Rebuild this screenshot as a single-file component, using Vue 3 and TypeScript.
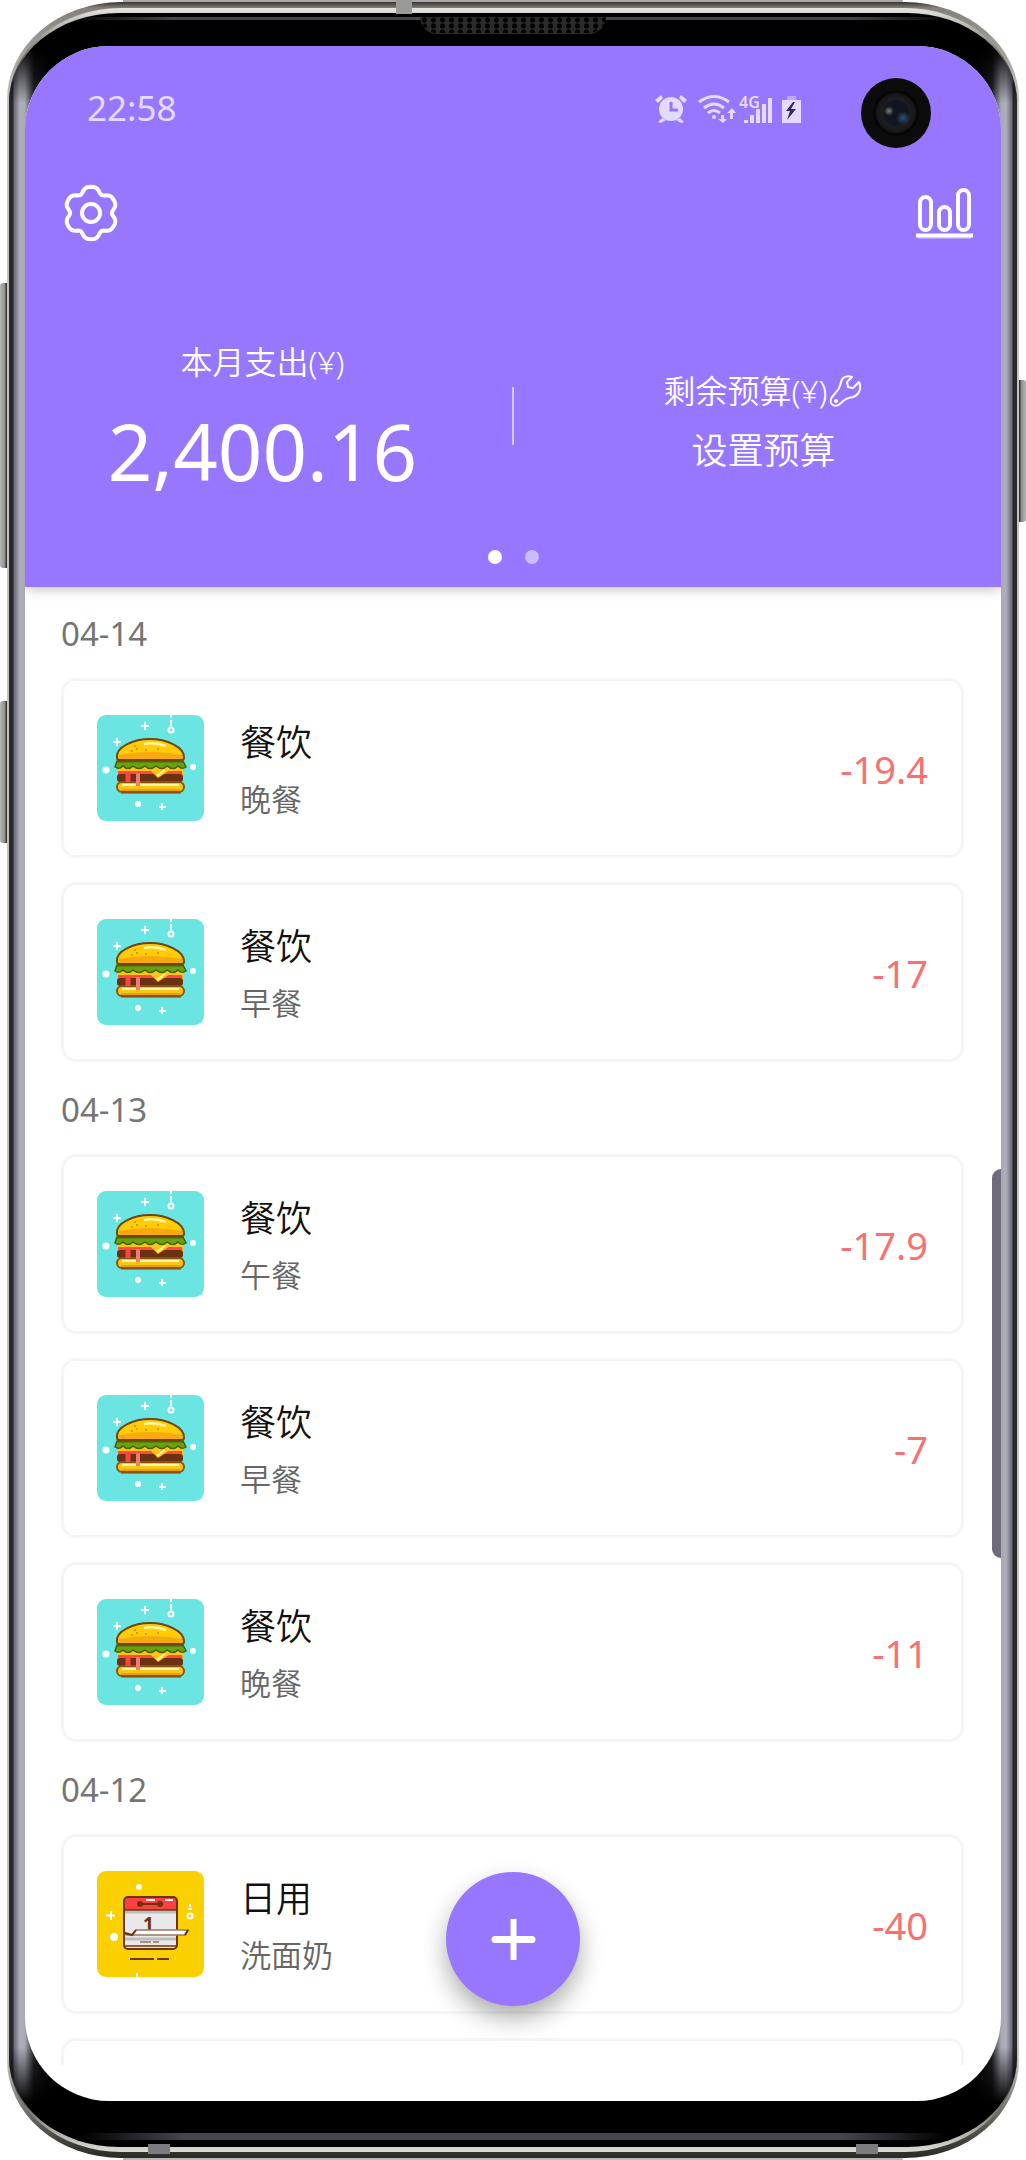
<script setup lang="ts">
type Kind = 'food' | 'daily'

interface Entry {
  kind: Kind
  title: string
  note: string
  amount: string
}

interface Day {
  date: string
  entries: Entry[]
}

const food = (note: string, amount: string): Entry => ({ kind: 'food', title: '餐饮', note, amount })

const days: Day[] = [
  { date: '04-14', entries: [food('晚餐', '-19.4'), food('早餐', '-17')] },
  { date: '04-13', entries: [food('午餐', '-17.9'), food('早餐', '-7'), food('晚餐', '-11')] },
  { date: '04-12', entries: [{ kind: 'daily', title: '日用', note: '洗面奶', amount: '-40' }] },
]

// Six-lobed outline of the settings cog, drawn around (29, 29).
const cog = Array.from({ length: 72 }, (_, i) => {
  const a = (i * Math.PI) / 36
  const r = 24.2 + 2.7 * Math.cos(6 * a) - 0.7 * Math.cos(12 * a)
  return `${(29 + r * Math.sin(a)).toFixed(1)},${(29 - r * Math.cos(a)).toFixed(1)}`
}).join(' ')
</script>

<template>
  <div class="stage">
    <i class="key volume"></i>
    <i class="key assist"></i>
    <i class="key power"></i>
    <div class="edge">
      <div class="rim">
        <div class="bezel">
          <i class="speaker"></i>
          <main class="screen">
            <header class="top">
              <div class="status">
                <time>22:58</time>
                <svg class="status-icons" width="150" height="32" viewBox="0 0 150 32" aria-hidden="true">
                  <g fill="#e3dafd">
                    <circle cx="19" cy="17" r="12" />
                    <path d="M3 8 L9 3 L11 6 L6 11Z M35 8 L29 3 L27 6 L32 11Z M10 26 L6 30 L9 31 L14 28Z M28 26 L32 30 L29 31 L24 28Z" />
                    <circle cx="62" cy="25" r="2" />
                    <path d="M69 23h3v4h3l-4 4-5-4h3zM78 27v-6h-3l5-5 4 5h-3v6z" />
                    <path d="M92 28h4v3h-4zM98 23h4v8h-4zM104 17h4v14h-4zM110 12h4v19h-4zM116 6h4v25h-4z" />
                    <path d="M130 8h19v23h-19z" />
                    <path d="M135 4h9v4h-9z" opacity=".5" />
                  </g>
                  <path d="M19 10v8h7" fill="none" stroke="#9677fe" stroke-width="3" />
                  <g fill="none" stroke="#e3dafd" stroke-width="3">
                    <path d="M47 10Q62 -1 77 10M52 16Q62 8 72 16M56 21Q62 16 68 21" />
                  </g>
                  <text x="87" y="16" font-size="16" font-weight="600" fill="#e3dafd">4G</text>
                  <path d="M141 10l-7 9h4l-3 9 9-11h-5l4-7z" fill="#35295c" />
                </svg>
              </div>
              <nav class="tools">
                <button type="button" aria-label="设置">
                  <svg width="58" height="58" viewBox="0 0 58 58" fill="none" stroke="#fff" stroke-width="4" stroke-linejoin="round">
                    <polygon :points="cog" />
                    <circle cx="29" cy="29" r="9" />
                  </svg>
                </button>
                <button type="button" aria-label="统计">
                  <svg width="57" height="58" viewBox="0 0 57 58" fill="none" stroke="#fff" stroke-width="4">
                    <rect x="4" y="13" width="11" height="33" rx="5.5" />
                    <rect x="23" y="23" width="11" height="23" rx="5.5" />
                    <rect x="42" y="6" width="11" height="40" rx="5.5" />
                    <path d="M0 51.5H57" />
                    <path d="M2 54H55" stroke-width="1" opacity=".6" />
                  </svg>
                </button>
              </nav>
              <section class="summary">
                <div class="col">
                  <span class="label">本月支出(¥)</span>
                  <strong class="total">2,400.16</strong>
                </div>
                <i class="divider"></i>
                <div class="col">
                  <span class="label">
                    剩余预算(¥)<svg width="36" height="36" viewBox="0 0 36 36" fill="none" stroke="#fff" stroke-width="2" stroke-linejoin="round" aria-hidden="true">
                      <path d="M24 4C19 2 14 4 13 9C12 15 10 17 4 24C2 27 2 31 5 32C8 34 11 32 13 30C17 26 19 25 25 24C31 22 34 15 31 9L25 15L20 14L19 9Z" />
                      <circle cx="8" cy="28" r="1" />
                    </svg>
                  </span>
                  <button class="budget" type="button">设置预算</button>
                </div>
              </section>
              <div class="dots"><i class="on"></i><i></i></div>
            </header>

            <div class="list">
              <section v-for="day in days" :key="day.date">
                <h2>{{ day.date }}</h2>
                <ul>
                  <li v-for="(entry, i) in day.entries" :key="i" class="card">
                    <svg v-if="entry.kind === 'food'" class="pic" width="107" height="106" viewBox="0 0 107 106" aria-hidden="true">
                      <rect width="107" height="106" rx="9" fill="#6be5e1" />
                      <g stroke="#fff" stroke-width="2">
                        <path d="M48 7v8M44 11h8M20 23v8M16 27h8M65 88v7M62 92h7M74 0v3M74 5v6" />
                        <circle cx="74" cy="15" r="2.5" fill="none" />
                      </g>
                      <g fill="#fff">
                        <circle cx="9" cy="55" r="3.5" />
                        <circle cx="96" cy="52" r="3" />
                        <circle cx="41" cy="89" r="3" />
                      </g>
                      <path d="M24 78h60" stroke="#5f9a90" stroke-width="2" />
                      <rect x="21" y="51" width="65" height="9" fill="#ffc414" />
                      <rect x="21" y="56" width="64" height="4" fill="#fb4a3e" />
                      <rect x="20" y="59" width="66" height="8" rx="3" fill="#6a3210" />
                      <path d="M51 53H76L61 63Z" fill="#ffc414" />
                      <path d="M60 61L68 55" stroke="#fff3a0" stroke-width="2" />
                      <rect x="20" y="67" width="67" height="10" rx="5" fill="#fcc60e" stroke="#8a5210" stroke-width="2" />
                      <path d="M24 75h59" stroke="#e89f10" stroke-width="2" />
                      <path d="M25 70h57" stroke="#fff5a8" stroke-width="2" />
                      <path d="M31 57v10" stroke="#fb4542" stroke-width="5" />
                      <path d="M41 58v13" stroke="#f47a78" stroke-width="4" />
                      <path d="M18 52L20 46H86L89 52Q85 55 81 51Q76 56 70 51Q65 56 59 51Q53 56 48 51Q42 56 36 51Q31 56 26 51Q22 55 18 52Z" fill="#67a409" stroke="#4c5c0c" stroke-width="1.5" />
                      <path d="M20 46h66" stroke="#4f6511" stroke-width="3" />
                      <path d="M20 43C18 32 37 24 53 24S88 32 87 43Q87 45 84 45H23Q20 45 20 43Z" fill="#ffcc05" stroke="#6e4612" stroke-width="2" />
                      <path d="M22 40Q54 34 85 40V44H22Z" fill="#f7a90f" />
                      <path d="M47 29Q58 27 69 31" stroke="#fff4a0" stroke-width="2.5" fill="none" />
                      <path d="M37 31h2M34 36h2M39 34h2M48 35h2M60 34h2" stroke="#d79a05" stroke-width="2" />
                    </svg>
                    <svg v-else class="pic" width="107" height="106" viewBox="0 0 107 106" aria-hidden="true">
                      <rect width="107" height="106" rx="9" fill="#fad000" />
                      <g stroke="#fff" stroke-width="2">
                        <path d="M14 40v9M9 44.5h9M93 33v3M91 38h4M40 102v4" />
                        <circle cx="93" cy="45" r="2.5" fill="none" />
                      </g>
                      <circle cx="42" cy="16" r="3" fill="#fff" />
                      <circle cx="17" cy="66" r="4" fill="#fff" />
                      <rect x="27" y="26" width="53" height="52" rx="4" fill="#e9e9e9" />
                      <path d="M27 39V30Q27 26 31 26H76Q80 26 80 30V39Z" fill="#fb403f" />
                      <path d="M28 41H79M28 68H79" stroke="#bdbdbd" stroke-width="3" />
                      <path d="M49 29h9M68 29h8" stroke="#fff" stroke-width="2" />
                      <path d="M43 33H63" stroke="#6b3410" stroke-width="2" />
                      <circle cx="43" cy="33" r="3" fill="#6b3410" />
                      <circle cx="63" cy="33" r="3" fill="#6b3410" />
                      <text x="46" y="60" font-size="19" font-weight="700" fill="#6b3410">1</text>
                      <path d="M27 39H80M28 75H79" stroke="#6b3410" stroke-width="1.5" />
                      <rect x="27" y="26" width="53" height="52" rx="4" fill="none" stroke="#6b3410" stroke-width="2" />
                      <path d="M28 63L35 64L39 59H91L88 64H30Z" fill="#fff" stroke="#9a7565" stroke-width="1.5" />
                      <path d="M28 62L35 64L39 59M91 59L88 64" fill="none" stroke="#6b3410" stroke-width="2" />
                      <path d="M43 71h11M56 71h6" stroke="#a9907f" stroke-width="2" />
                      <path d="M33 88H57M60 88H72" stroke="#6b3a06" stroke-width="2" />
                    </svg>
                    <div class="words">
                      <h3>{{ entry.title }}</h3>
                      <p>{{ entry.note }}</p>
                    </div>
                    <span class="amount">{{ entry.amount }}</span>
                  </li>
                </ul>
              </section>
              <div class="card peek"></div>
            </div>

            <i class="camera"></i>
            <i class="panel-handle"></i>
            <button class="add" type="button" aria-label="记一笔">
              <svg width="45" height="45" viewBox="0 0 45 45" stroke="#fff" stroke-linecap="round">
                <path d="M22.5 2V43" stroke-width="6" stroke-linecap="butt" />
                <path d="M4 22.5H41" stroke-width="7" />
              </svg>
            </button>
          </main>
        </div>
      </div>
    </div>
    <i class="band band-top"></i>
    <i class="band band-left"></i>
    <i class="band band-right"></i>
  </div>
</template>

<style>
body {
  margin: 0;
  background: #fff;
}
</style>

<style scoped>
* {
  box-sizing: border-box;
}

.stage {
  position: relative;
  padding: 2px 7px;
  font-family: "Noto Sans", "Noto Sans CJK SC", sans-serif;
  overflow: hidden;
  background:
    linear-gradient(#a8a8a8, #a8a8a8) center top / 76% 3px no-repeat,
    linear-gradient(#b8b8b8, #b8b8b8) center bottom / 76% 3px no-repeat,
    #fff;
}

.edge {
  position: relative;
  padding: 6px 2px;
  border-radius: 114px / 98px;
  background: linear-gradient(to bottom, #38332f 0, #85807b 6px, #c4c4c0 100px, #c4c4c0 calc(100% - 100px), #33312c calc(100% - 6px), #2c2a26 100%);
}

.rim {
  padding: 5px 0;
  border-radius: 112px / 94px;
  background: linear-gradient(to bottom, #e6e6e0 0, #d9d9d3 5px, #54504c 60px, #2b2b2d 130px, #2b2b2d calc(100% - 130px), #54504c calc(100% - 60px), #dcdcd6 100%);
}

.bezel {
  position: relative;
  padding: 33px 16px 46px;
  border-radius: 110px / 90px;
  background:
    linear-gradient(to right, transparent, #46464f 12%, #46464f 88%, transparent) center 4px / 88% 3px no-repeat,
    linear-gradient(to right, transparent, #45454f 12%, #45454f 88%, transparent) center calc(100% - 7px) / 86% 7px no-repeat,
    linear-gradient(to bottom, #000 34px, transparent 90px, transparent calc(100% - 100px), #000 calc(100% - 44px)),
    linear-gradient(to right, #29292b 0, #29292b 4px, #676875 5px, #8a8b97 8px, #aeafb9 11px, #a7a8b2 16px, #24242a 25px, #000 42px, #000 calc(100% - 42px), #24242a calc(100% - 25px), #a7a8b2 calc(100% - 16px), #aeafb9 calc(100% - 11px), #8a8b97 calc(100% - 8px), #676875 calc(100% - 5px), #29292b calc(100% - 4px), #29292b 100%);
}

.speaker {
  position: absolute;
  top: 4px;
  left: 50%;
  width: 186px;
  height: 17px;
  margin-left: -93px;
  border-bottom: 1px solid #2b2b2b;
  border-radius: 0 0 20px 20px;
  background: radial-gradient(circle, #000 2px, #2a2a2a 3px) 0 0 / 9px 6px;
}

.key {
  position: absolute;
  width: 10px;
  border-radius: 3px;
  background: linear-gradient(to right, #b5b5b5, #8e8e8c 5px, #3c3533 6px);
}

.volume {
  top: 283px;
  left: 0;
  height: 285px;
}

.assist {
  top: 701px;
  left: 0;
  height: 142px;
}

.power {
  top: 380px;
  right: 0;
  height: 142px;
  transform: scaleX(-1);
}

.band {
  position: absolute;
  width: 22px;
  height: 10px;
  background: #7c7c80;
}

.band-top {
  top: 0;
  left: 396px;
  width: 16px;
  height: 14px;
  background: #9a9a98;
}

.band-left {
  bottom: 6px;
  left: 148px;
}

.band-right {
  bottom: 6px;
  right: 148px;
}

.screen {
  position: relative;
  overflow: hidden;
  padding-bottom: 36px;
  border-radius: 84px;
  background: #fff;
}

.top {
  position: relative;
  height: 541px;
  padding: 38px 28px 0 37px;
  color: #fff;
  background: #9677fe;
  box-shadow: 0 2px 12px rgba(0, 0, 0, 0.25);
}

.status {
  display: flex;
  align-items: center;
  justify-content: space-between;
  height: 48px;
  padding: 0 171px 0 25px;
}

.status time {
  font-size: 35px;
  line-height: 48px;
  color: #e3dafd;
}

.tools {
  display: flex;
  justify-content: space-between;
  margin-top: 52px;
}

button {
  padding: 0;
  border: 0;
  color: inherit;
  background: none;
  font-family: inherit;
}

.tools svg {
  display: block;
}

.summary {
  display: flex;
  align-items: center;
  height: 180px;
  margin: 84px -28px 0 -37px;
}

.col {
  display: flex;
  flex: 1;
  flex-direction: column;
  align-items: center;
  padding-top: 10px;
}

.label {
  display: flex;
  align-items: center;
  font-size: 32px;
  font-weight: 350;
  line-height: 48px;
}

.total {
  margin-top: 12px;
  font-size: 78px;
  font-weight: 400;
  line-height: 106px;
}

.budget {
  margin-top: 12px;
  font-size: 36px;
  font-weight: 350;
  line-height: 48px;
}

.divider {
  width: 2px;
  height: 58px;
  margin: 0 12px;
  background: rgba(255, 255, 255, 0.6);
}

.dots {
  display: flex;
  justify-content: center;
  gap: 23px;
  margin: 44px -28px 0 -37px;
}

.dots i {
  width: 14px;
  height: 14px;
  border-radius: 50%;
  background: rgba(255, 255, 255, 0.5);
}

.dots .on {
  background: #fff;
}

.list {
  padding: 23px 37px 0 36px;
}

h2 {
  margin: 0 0 20px;
  font-size: 33px;
  font-weight: 400;
  line-height: 48px;
  color: #757575;
}

ul {
  margin: 0;
  padding: 0;
  list-style: none;
}

.card {
  display: flex;
  align-items: center;
  height: 180px;
  margin-bottom: 24px;
  padding: 0 33px;
  border: 3px solid #f5f5f5;
  border-radius: 15px;
}

.peek {
  height: 27px;
  margin: 0;
  border-bottom: 0;
  border-radius: 15px 15px 0 0;
}

.pic {
  flex: none;
}

.words {
  flex: 1;
  margin-left: 36px;
  padding-top: 6px;
}

h3,
p {
  margin: 0;
  font-weight: 350;
}

h3 {
  font-size: 36px;
  line-height: 56px;
  color: #111;
}

p {
  font-size: 31px;
  line-height: 56px;
  color: #666;
}

.amount {
  padding-top: 2px;
  font-size: 38px;
  line-height: 48px;
  color: #f87070;
}

.camera {
  position: absolute;
  top: 32px;
  right: 70px;
  width: 70px;
  height: 70px;
  border-radius: 50%;
  background:
    radial-gradient(circle at 28px 33px, #74836f 0, transparent 5px),
    radial-gradient(circle at 42px 40px, #2c5278 0, transparent 7px),
    radial-gradient(circle, #10151f 0, #10151f 12px, #1d1d1f 14px, #17171a 19px, #050505 21px, #0c0c0d 24px);
}

.panel-handle {
  position: absolute;
  top: 1123px;
  right: 0;
  width: 9px;
  height: 389px;
  border-radius: 9px 0 0 9px;
  background: #6f6b7c;
}

.add {
  position: absolute;
  bottom: 95px;
  left: 50%;
  display: flex;
  align-items: center;
  justify-content: center;
  width: 134px;
  height: 134px;
  border-radius: 50%;
  background: #9677fe;
  box-shadow: 0 12px 24px rgba(0, 0, 0, 0.32);
  transform: translateX(-50%);
}
</style>
